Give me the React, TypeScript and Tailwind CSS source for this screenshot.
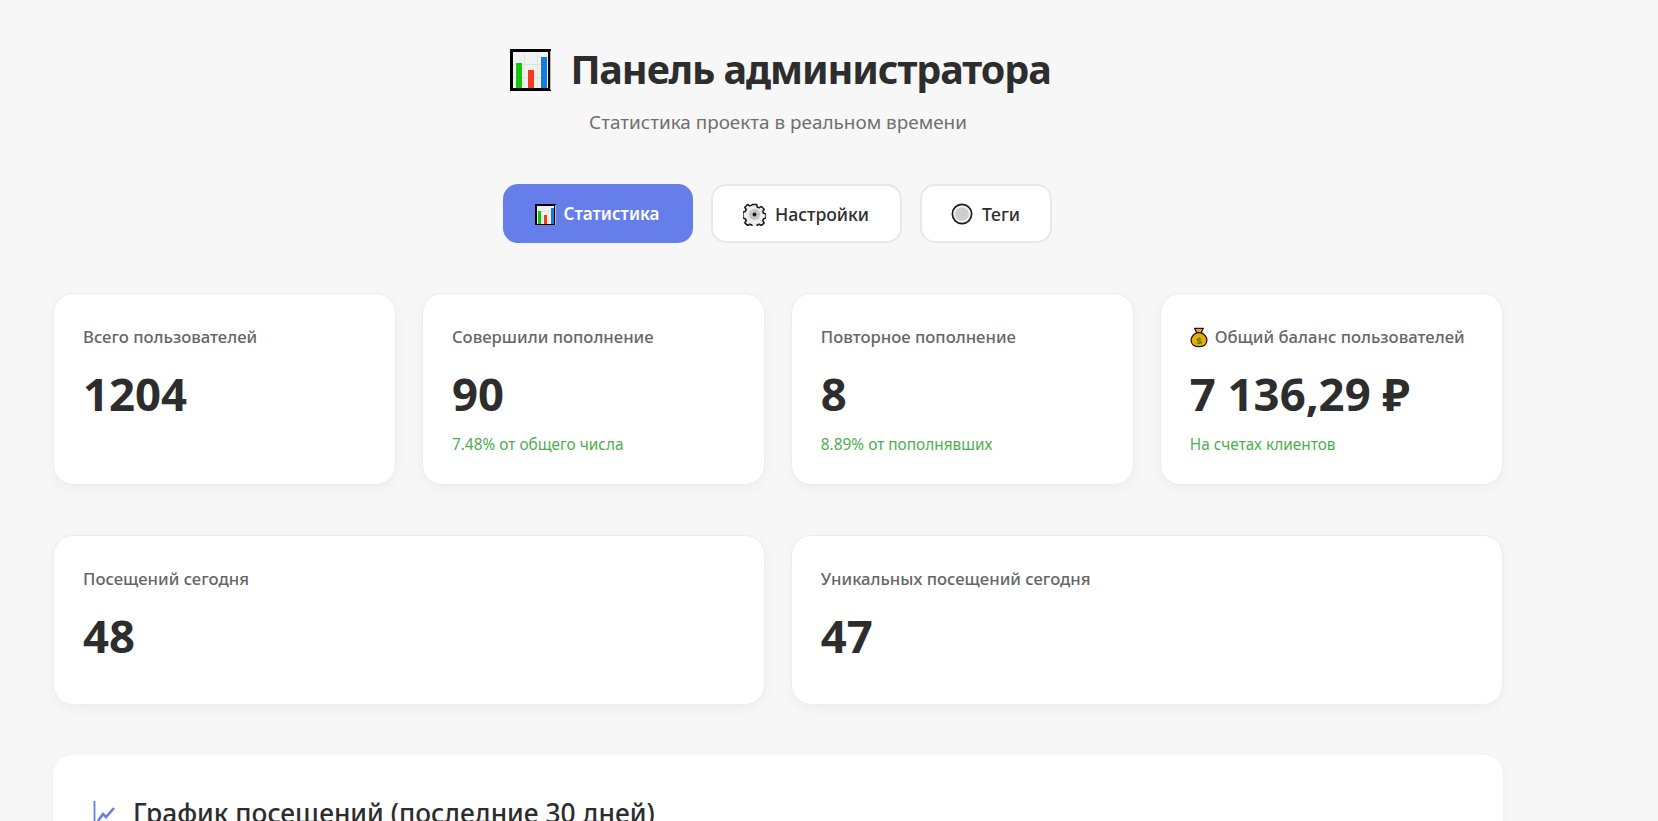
function ChartEmoji({ className }: { className: string }) {
  return (
    <svg viewBox="0 0 42 42" className={className} shapeRendering="crispEdges">
      <rect x="1.500" y="1.500" width="38" height="39" fill="#f2f2f2" stroke="#000" strokeWidth="3" />
      <path d="M3 15h35M3 28h35M14 3v36M27 3v36" stroke="#e2e2e2" strokeWidth="1" />
      <rect x="40" y="2" width="1" height="39" fill="#b5b5b5" />
      <rect x="6" y="14" width="6" height="25" fill="#16c60c" />
      <rect x="18" y="21" width="6" height="18" fill="#f7391e" />
      <rect x="31" y="8" width="6" height="31" fill="#0f7ee0" />
    </svg>
  );
}

function GearEmoji({ className }: { className: string }) {
  return (
    <svg viewBox="0 0 24 24" className={className}>
      <path
        d="M9.800 1.500h4.400l.6 2.700 2 .8 2.400-1.400 2.900 2.900-1.500 2.300.9 2 2.600.7v4.200l-2.600.7-.9 2 1.500 2.300-2.900 2.900-2.400-1.400-2 .8-.6 2.700H9.800l-.6-2.700-2-.8-2.400 1.400-2.900-2.900 1.500-2.300-.9-2-2.600-.7V9.500l2.600-.7.9-2-1.500-2.300 2.900-2.900 2.400 1.400 2-.8z"
        fill="#ececec"
        stroke="#1a1a1a"
        strokeWidth="1.600"
        strokeLinejoin="round"
      />
      <circle cx="12" cy="12" r="5.800" fill="#c4c4c4" />
      <circle cx="12" cy="12" r="2" fill="#1a1a1a" />
    </svg>
  );
}

function RadioEmoji({ className }: { className: string }) {
  return (
    <svg viewBox="0 0 24 24" className={className}>
      <circle cx="12" cy="12" r="10.500" fill="#f2f2f2" stroke="#1a1a1a" strokeWidth="1.800" />
      <circle cx="12" cy="12" r="7.500" fill="#cdcdcd" />
    </svg>
  );
}

function MoneyEmoji({ className }: { className: string }) {
  return (
    <svg viewBox="0 0 20 24" className={className}>
      <path
        d="M5 1.500h10l-2.500 5c4 2 6.500 5.500 6.500 9 0 4.500-4 7-9 7s-9-2.500-9-7c0-3.500 2.500-7 6.500-9z"
        fill="#f2a900"
        stroke="#1a1a1a"
        strokeWidth="1.500"
        strokeLinejoin="round"
      />
      <path d="M6.500 6.500h7" stroke="#1a1a1a" strokeWidth="1.500" />
      <text
        x="10"
        y="19.500"
        textAnchor="middle"
        fontSize="11"
        fontWeight="700"
        fill="#1d8a10"
        fontFamily="Liberation Sans, sans-serif"
      >
        $
      </text>
    </svg>
  );
}

function TrendEmoji({ className }: { className: string }) {
  return (
    <svg viewBox="0 0 24 24" className={className} fill="none">
      <path d="M1.500 0v24" stroke="#667eea" strokeWidth="1.800" />
      <path d="M5 20l5-7 3 3 8-9" stroke="#667eea" strokeWidth="2.600" />
    </svg>
  );
}

function Tab({ active, icon, label, className }: { active?: boolean; icon: React.ReactNode; label: string; className: string }) {
  return (
    <button
      className={
        active
          ? `${className} flex h-[59px] items-center justify-center gap-[7px] rounded-[15px] bg-[#667eea] pt-[1px] text-[17px] font-semibold text-white`
          : `${className} flex h-[59px] items-center justify-center gap-[9px] rounded-[15px] border-2 border-[#e8e8e8] bg-white pt-[1px] text-[17.6px] font-medium text-[#2d2d2d]`
      }
    >
      {icon}
      {label}
    </button>
  );
}

function StatCard({ label, icon, value, sub, className }: { label: string; icon?: React.ReactNode; value: string; sub?: string; className: string }) {
  return (
    <div className={`${className} rounded-[20px] border border-[#ececec] bg-white px-[29px] pt-[31px] shadow-[0_4px_12px_rgba(0,0,0,0.04)]`}>
      <div className="flex h-[24px] items-center gap-[7px] text-[16.7px] leading-[24px] font-medium text-[#666666]">
        {icon}
        {label}
      </div>
      <div className="mt-[14px] text-[45.5px] leading-[60px] font-bold text-[#2d2d2d]">{value}</div>
      {sub && <div className="mt-[12px] text-[15.4px] leading-[20px] text-[#4caf50]">{sub}</div>}
    </div>
  );
}

export default function App() {
  return (
    <div className="h-[821px] w-full overflow-hidden bg-[#f7f7f7] font-['Noto_Sans','Open_Sans',sans-serif]">
      <div className="ml-[53px] w-[1450px] pt-[40px]">
        {/* Header */}
        <div className="flex flex-col items-center">
          <h1 className="ml-[4px] flex h-[60px] items-center gap-[17px] text-[39.5px] font-bold tracking-[-1.1px] text-[#2d2d2d]">
            <ChartEmoji className="h-[42px] w-[44px]" />
            Панель администратора
          </h1>
          <p className="mt-[8px] text-[18.9px] leading-[28px] text-[#6f6f6f]">Статистика проекта в реальном времени</p>
        </div>

        {/* Tabs */}
        <div className="mt-[48px] mr-[2px] flex justify-center gap-[18px]">
          <Tab active className="w-[190px]" label="Статистика" icon={<ChartEmoji className="h-[21px] w-[21px]" />} />
          <Tab className="w-[191px]" label="Настройки" icon={<GearEmoji className="h-[23px] w-[23px]" />} />
          <Tab className="w-[132px]" label="Теги" icon={<RadioEmoji className="h-[22px] w-[22px]" />} />
        </div>

        {/* Stats */}
        <div className="mt-[50px] flex gap-[25.6px]">
          <StatCard className="h-[192px] flex-1" label="Всего пользователей" value="1204" />
          <StatCard className="h-[192px] flex-1" label="Совершили пополнение" value="90" sub="7.48% от общего числа" />
          <StatCard className="h-[192px] flex-1" label="Повторное пополнение" value="8" sub="8.89% от пополнявших" />
          <StatCard
            className="h-[192px] flex-1"
            label="Общий баланс пользователей"
            icon={<MoneyEmoji className="h-[21px] w-[18px]" />}
            value="7 136,29 ₽"
            sub="На счетах клиентов"
          />
        </div>

        <div className="mt-[50px] flex gap-[25.6px]">
          <StatCard className="h-[170px] flex-1" label="Посещений сегодня" value="48" />
          <StatCard className="h-[170px] flex-1" label="Уникальных посещений сегодня" value="47" />
        </div>

        {/* Chart */}
        <div className="mt-[50px] h-[400px] rounded-[20px] bg-white px-[40px] pt-[40px] shadow-[0_4px_12px_rgba(0,0,0,0.04)]">
          <h2 className="flex items-center gap-[16px] text-[26.3px] leading-[36px] font-medium text-[#2d2d2d]">
            <TrendEmoji className="h-[26px] w-[24px]" />
            График посещений (последние 30 дней)
          </h2>
        </div>
      </div>
    </div>
  );
}
